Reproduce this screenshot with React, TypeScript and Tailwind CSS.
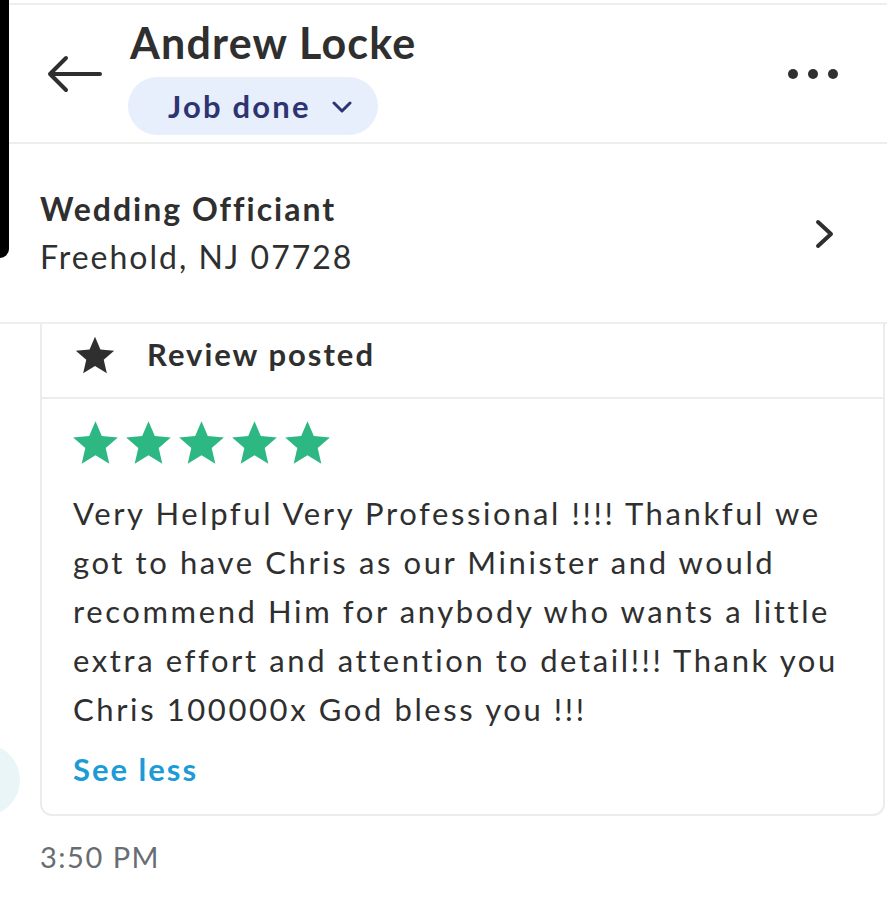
import React from "react";

const font = { fontFamily: "Lato, 'Noto Sans', sans-serif" };

function Star({ className }: { className?: string }) {
  return (
    <svg viewBox="0 0 24 24" className={className} fill="currentColor">
      <path d="M12 1.6l3.09 7.26 7.86.68-5.96 5.17 1.78 7.69L12 18.3l-6.77 4.1 1.78-7.69L1.05 9.54l7.86-.68z" />
    </svg>
  );
}

export default function App() {
  const lines = [
    "Very Helpful Very Professional !!!! Thankful we",
    "got to have Chris as our Minister and would",
    "recommend Him for anybody who wants a little",
    "extra effort and attention to detail!!! Thank you",
    "Chris 100000x God bless you !!!",
  ];
  return (
    <div className="relative w-[887px] h-[900px] overflow-hidden bg-white text-[#2f2f2f]" style={font}>
      <div className="absolute left-0 top-0 w-[9px] h-[258px] bg-black rounded-br-[9px] z-10" />
      <div className="absolute left-[-52px] top-[744px] w-[72px] h-[72px] rounded-full bg-[#eaf5f8]" />

      <div className="mt-[3px] border-t-2 border-[#eeeeee]" />
      <header className="flex items-start h-[139px] border-b-2 border-[#eeeeee]">
        <div className="w-[130px] pl-[46px] pt-[49px]">
          <svg width="57" height="40" viewBox="0 0 57 40" fill="none" stroke="#2f2f2f" strokeWidth="4" strokeLinecap="round" strokeLinejoin="round">
            <path d="M54 20H4M20 4L4 20l16 16" />
          </svg>
        </div>
        <div className="flex flex-col pt-[14px]">
          <div className="text-[43px] font-bold leading-[48px] tracking-[1.2px]">Andrew Locke</div>
          <div className="mt-[10px] -ml-[2px] flex items-center h-[58px] w-[250px] rounded-full bg-[#e8effc] pl-[40px]">
            <span className="text-[31px] font-bold text-[#2e3472] tracking-[2.2px]">Job done</span>
            <svg className="ml-[21px] mt-[3px]" width="20" height="13" viewBox="0 0 20 13" fill="none" stroke="#2e3472" strokeWidth="3" strokeLinecap="round" strokeLinejoin="round">
              <path d="M2 2l8 8 8-8" />
            </svg>
          </div>
        </div>
        <div className="ml-auto mr-[49px] mt-[64px] flex gap-[10px]">
          <span className="w-[10px] h-[10px] rounded-full bg-[#2f2f2f]" />
          <span className="w-[10px] h-[10px] rounded-full bg-[#2f2f2f]" />
          <span className="w-[10px] h-[10px] rounded-full bg-[#2f2f2f]" />
        </div>
      </header>

      <div className="flex items-center h-[180px] border-b-2 border-[#eeeeee] pl-[40px] pr-[52px]">
        <div className="flex flex-col pt-[2px]">
          <div className="text-[32px] font-bold leading-[46px] tracking-[2px]">Wedding Officiant</div>
          <div className="text-[32px] leading-[50px] tracking-[2px]">Freehold, NJ 07728</div>
        </div>
        <svg className="ml-auto mt-[2px]" width="20" height="30" viewBox="0 0 20 30" fill="none" stroke="#2f2f2f" strokeWidth="4" strokeLinecap="round" strokeLinejoin="round">
          <path d="M3 3l13 12L3 27" />
        </svg>
      </div>

      <div className="ml-[40px] mr-[2px] border-x-2 border-b-2 border-[#ececec] rounded-b-[12px]">
        <div className="flex items-center h-[75px] border-b-2 border-[#ececec] pl-[32px] pb-[12px]">
          <Star className="w-[42px] h-[42px] text-[#2f2f2f]" />
          <span className="ml-[31px] text-[31px] font-bold tracking-[2px]">Review posted</span>
        </div>
        <div className="pl-[29px] pt-[19px] pb-[25px]">
          <div className="flex gap-[4px]">
            {[0, 1, 2, 3, 4].map((i) => (
              <Star key={i} className="w-[49px] h-[49px] text-[#2db783]" />
            ))}
          </div>
          <div className="mt-[22px] text-[31px] leading-[49px] tracking-[2.6px] pl-[2px]">
            {lines.map((l, i) => (
              <div key={i} className="whitespace-nowrap">{l}</div>
            ))}
          </div>
          <div className="mt-[15px] pl-[2px] text-[31px] font-bold text-[#1c9bd6] leading-[40px] tracking-[2px]">See less</div>
        </div>
      </div>

      <div className="pl-[40px] pt-[19px] text-[29px] text-[#676d73] tracking-[1.5px]">3:50 PM</div>
    </div>
  );
}
